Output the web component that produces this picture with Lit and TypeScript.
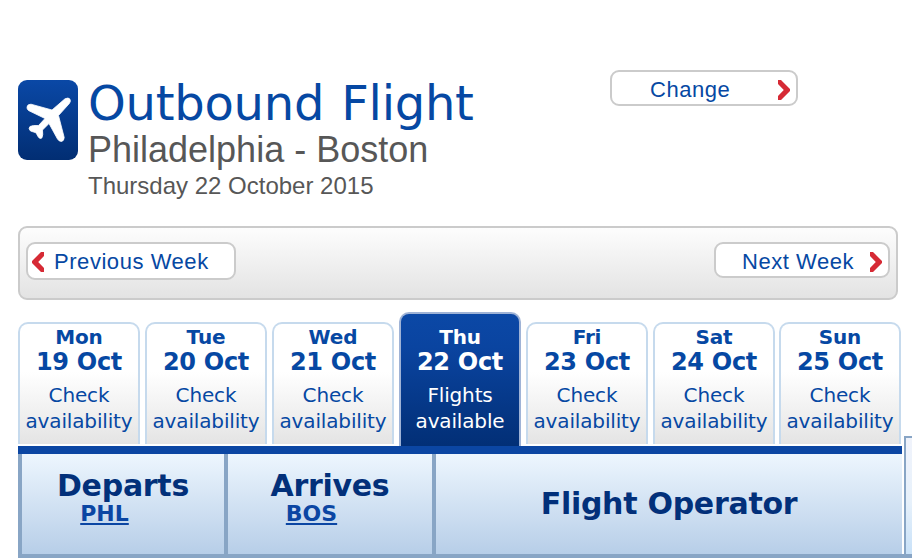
import { LitElement, html, css, svg } from "lit";
import { customElement, property } from "lit/decorators.js";

@customElement("nav-chevron")
class NavChevron extends LitElement {
  @property() dir: "left" | "right" = "right";
  static styles = css`
    :host { display: block; width: 12px; height: 20px; flex: none; }
    svg { display: block; }
  `;
  render() {
    const d = this.dir === "left" ? "M12 0H9L0 9V11L9 20H12V16L6.2 10L12 4Z" : "M0 0H3L12 9V11L3 20H0V16L5.8 10L0 4Z";
    return html`<svg width="12" height="20" viewBox="0 0 12 20">${svg`<path d=${d} fill="#d62a35"/>`}</svg>`;
  }
}

@customElement("day-tab")
class DayTab extends LitElement {
  @property() day = "";
  @property() date = "";
  @property({ type: Boolean, reflect: true }) active = false;
  static styles = css`
    :host {
      display: block; box-sizing: border-box; width: 122px; height: 122px; flex: none;
      border: 2px solid #c6daed; border-bottom: 0; border-radius: 10px 10px 0 0;
      background: linear-gradient(#fff 0%, #fff 40%, #e4e4e4 100%);
      color: #0648a3; text-align: center; white-space: nowrap; margin-bottom: 2px;
    }
    :host(:last-child) { margin-left: -1px; }
    :host([active]) {
      height: 134px; margin-bottom: 0; padding-top: 10px; color: #fff;
      border-color: #9fb3d6; background: linear-gradient(#0b48a6, #0a44a0 25%, #022f76);
    }
    div { display: flex; justify-content: center; }
    .day { font-weight: bold; font-size: 20px; line-height: 26px; letter-spacing: -0.15px; }
    .date { font-weight: bold; font-size: 24px; line-height: 24px; margin-bottom: 8px; letter-spacing: -0.3px; }
    .note { font-size: 20px; line-height: 26px; letter-spacing: -0.15px; }
  `;
  render() {
    return html`
      <div class="day">${this.day}</div>
      <div class="date">${this.date}</div>
      <div class="note">${this.active ? "Flights" : "Check"}</div>
      <div class="note">${this.active ? "available" : "availability"}</div>
    `;
  }
}

@customElement("app-root")
class AppRoot extends LitElement {
  static styles = css`
    :host {
      display: block; box-sizing: border-box; width: 912px; height: 560px; overflow: hidden;
      background: #fff; font-family: "DejaVu Sans", Verdana, sans-serif; white-space: nowrap;
    }
    .top { display: flex; height: 226px; box-sizing: border-box; padding: 70px 0 0 18px; }
    .icon { display: block; margin: 10px 10px 0 0; flex: none; }
    .titles { width: 522px; padding-top: 10px; }
    .title { font-size: 48px; line-height: 46px; color: #0648a3; letter-spacing: -0.25px; word-spacing: 2px; }
    .route { font: 36px/46px "Liberation Sans", Arial, sans-serif; color: #575757; padding-top: 1px; margin-bottom: -1px; }
    .when { font: 24px/27px "Liberation Sans", Arial, sans-serif; color: #575757; }
    .btn {
      display: flex; align-items: center; box-sizing: border-box; height: 36px;
      border: 2px solid #cbcbcb; border-radius: 9px; background: #fff; color: #0648a3;
      font: 22px/28px "Liberation Sans", Arial, sans-serif; letter-spacing: 0.55px;
    }
    .change { width: 188px; padding: 4px 6px 0 38px; justify-content: space-between; }
    .week {
      display: flex; justify-content: space-between; align-items: flex-start; box-sizing: border-box;
      width: 880px; height: 74px; margin: 0 0 12px 18px; padding: 14px 6px;
      border: 2px solid #cbcbcb; border-radius: 9px; background: linear-gradient(#fdfdfd, #e3e3e3);
    }
    .prev { width: 210px; height: 38px; padding: 2px 0 0 4px; gap: 10px; }
    .next { width: 176px; padding: 4px 6px 0 26px; justify-content: space-between; }
    .lower { display: flex; }
    .main { width: 884px; margin-left: 18px; }
    .tabs { display: flex; gap: 5px; align-items: flex-end; height: 134px; }
    .bar { height: 8px; background: #0b46a3; }
    .head { display: flex; height: 100px; color: #02307a; }
    .cell {
      box-sizing: border-box; border-left: 4px solid #88a5c5; font-weight: bold; font-size: 30px; line-height: 32px; letter-spacing: -0.28px;
      background: linear-gradient(#edf6fe, #b7cee8); display: flex; flex-direction: column; align-items: center; padding-top: 16px;
    }
    .c1 { width: 206px; }
    .c2 { width: 208px; }
    .c3 { width: 470px; padding-top: 34px; }
    .code {
      font-size: 22px; line-height: 24px; color: #0b46a3; margin: 0 37px 0 0; letter-spacing: 0;
      text-decoration: underline; text-decoration-thickness: 1.5px; text-underline-offset: 2px; text-decoration-skip-ink: none;
    }
    .side {
      margin: 124px 0 0 2px; height: 118px; flex: 1; box-sizing: border-box;
      border: solid #88a5c5; border-width: 2px 0 0 2px; background: linear-gradient(#f0f3fb, #e7f1fb 55%, #c8e1f8);
    }
    .foot { height: 4px; margin-left: 18px; background: #88a5c5; }
  `;
  private days = [["Mon", "19 Oct"], ["Tue", "20 Oct"], ["Wed", "21 Oct"], ["Thu", "22 Oct"], ["Fri", "23 Oct"], ["Sat", "24 Oct"], ["Sun", "25 Oct"]];
  render() {
    return html`
      <div class="top">
        <svg class="icon" width="60" height="80" viewBox="0 0 60 80">
          <defs><linearGradient id="g" x1="0" y1="0" x2="0" y2="1"><stop offset="0" stop-color="#0a48a6"/><stop offset="1" stop-color="#022e73"/></linearGradient></defs>
          <rect width="60" height="80" rx="9" fill="url(#g)"/>
          <path d="M9 27Q9.5 24 13 24.2L34 30L47 18.8Q50.5 17 52 19.2Q53 21 51.5 23.3L40.5 35.5L46.2 57.5Q46 61 43.5 61.5Q41 61.5 39.5 59L31 43.5L24.5 50Q25.3 55.5 23.8 58Q21.5 59.5 20 56.5L18 52.8L12.5 51Q10 48.5 12 46.5Q14.5 45 20.5 45.5L27 38.5L10.5 30.5Q8.8 29 9 27Z" fill="#fff" stroke="#fff" stroke-width=".8"/>
        </svg>
        <div class="titles">
          <div class="title">Outbound Flight</div>
          <div class="route">Philadelphia - Boston</div>
          <div class="when">Thursday 22 October 2015</div>
        </div>
        <div class="btn change"><span>Change</span><nav-chevron></nav-chevron></div>
      </div>
      <div class="week">
        <div class="btn prev"><nav-chevron dir="left"></nav-chevron><span>Previous Week</span></div>
        <div class="btn next"><span>Next Week</span><nav-chevron></nav-chevron></div>
      </div>
      <div class="lower">
        <div class="main">
          <div class="tabs">${this.days.map(([d, n]) => html`<day-tab day=${d} date=${n} ?active=${d === "Thu"}></day-tab>`)}</div>
          <div class="bar"></div>
          <div class="head">
            <div class="cell c1"><span>Departs</span><span class="code">PHL</span></div>
            <div class="cell c2"><span>Arrives</span><span class="code">BOS</span></div>
            <div class="cell c3"><span>Flight Operator</span></div>
          </div>
        </div>
        <div class="side"></div>
      </div>
      <div class="foot"></div>
    `;
  }
}
